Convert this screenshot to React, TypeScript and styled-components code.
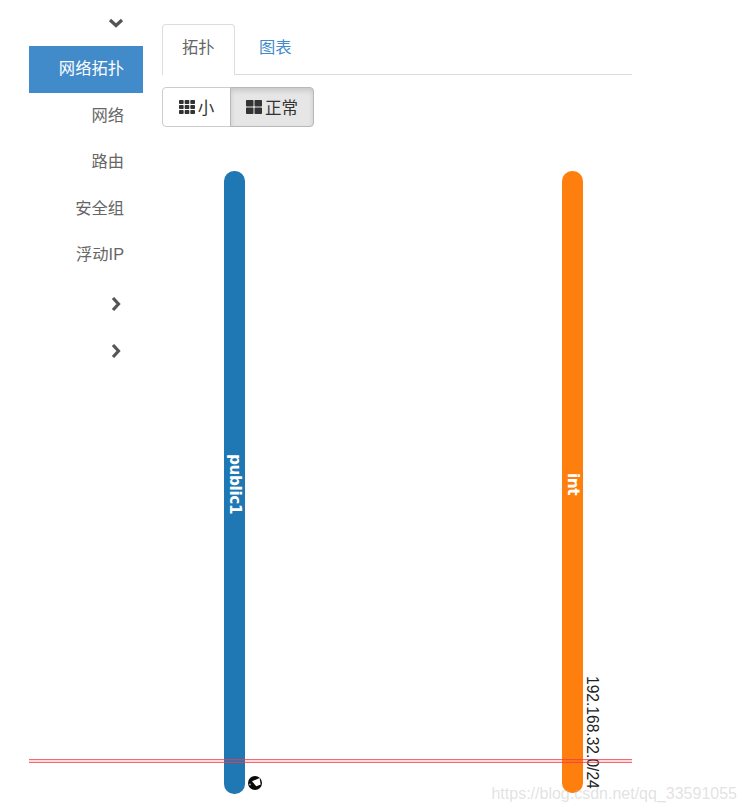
import React from "react";
import styled, { createGlobalStyle } from "styled-components";
import { FaTh, FaThLarge } from "react-icons/fa";

const GlobalStyle = createGlobalStyle`
  html, body {
    margin: 0;
    background: #fff;
  }
  body {
    font-family: "Liberation Sans", "Noto Sans CJK SC", sans-serif;
    color: #555;
  }
`;

const NAV_ITEMS = ["网络", "路由", "安全组", "浮动IP"];

const ChevronDown = () => (
  <ChevronIcon viewBox="0 0 16 10" $width={16} $height={10}>
    <path d="M2 2 L8 7.5 L14 2" />
  </ChevronIcon>
);

const ChevronRight = () => (
  <ChevronIcon viewBox="0 0 10 16" $width={10} $height={16}>
    <path d="M2 2 L7.5 8 L2 14" />
  </ChevronIcon>
);

export default function App() {
  return (
    <>
      <GlobalStyle />
      <Page>
        <Sidebar>
          <ChevronRow $height={46} $pad={19}>
            <ChevronDown />
          </ChevronRow>
          <NavItem $active>网络拓扑</NavItem>
          {NAV_ITEMS.map((item) => (
            <NavItem key={item}>{item}</NavItem>
          ))}
          <ChevronRow $height={50} $pad={22}>
            <ChevronRight />
          </ChevronRow>
          <ChevronRow $height={44} $pad={22}>
            <ChevronRight />
          </ChevronRow>
        </Sidebar>
        <Main>
          <Tabs>
            <Tab $active>拓扑</Tab>
            <Tab>图表</Tab>
          </Tabs>
          <ButtonGroup>
            <ToggleButton>
              <FaTh />小
            </ToggleButton>
            <ToggleButton $active>
              <FaThLarge />正常
            </ToggleButton>
          </ButtonGroup>
          <Canvas>
            <NetworkBar $left={62} $height={623} $color="#1f77b4">
              <BarLabel $top={283}>public1</BarLabel>
            </NetworkBar>
            <NetworkBar $left={400} $height={622} $color="#ff7f0e">
              <BarLabel $top={302}>int</BarLabel>
            </NetworkBar>
            <Subnet>192.168.32.0/24</Subnet>
            <PortIcon viewBox="0 0 14 14">
              <circle cx="7" cy="7" r="7" fill="#0a0a0a" />
              <path d="M4 5.3 L11.6 2 L12.7 8.6 L8.3 10.3 Z" fill="#fff" />
              <circle cx="2" cy="8.6" r="1" fill="#a0a0a0" />
            </PortIcon>
          </Canvas>
        </Main>
        <RedLine />
        <Watermark>https://blog.csdn.net/qq_33591055</Watermark>
      </Page>
    </>
  );
}

const Page = styled.div`
  position: relative;
  display: flex;
  gap: 19px;
  width: 746px;
  height: 810px;
  padding-left: 29px;
  box-sizing: border-box;
  overflow: hidden;
`;

const Sidebar = styled.nav`
  width: 114px;
  flex: none;
`;

const ChevronRow = styled.div<{ $height: number; $pad: number }>`
  display: flex;
  align-items: center;
  justify-content: flex-end;
  height: ${(p) => p.$height}px;
  padding-right: ${(p) => p.$pad}px;
`;

const ChevronIcon = styled.svg<{ $width: number; $height: number }>`
  width: ${(p) => p.$width}px;
  height: ${(p) => p.$height}px;

  path {
    fill: none;
    stroke: #555;
    stroke-width: 3.2;
  }
`;

const NavItem = styled.div<{ $active?: boolean }>`
  height: 47px;
  margin-bottom: -0.5px;
  line-height: 45px;
  padding-right: 19px;
  text-align: right;
  font-size: 16.3px;
  color: ${(p) => (p.$active ? "#fff" : "#666")};
  background: ${(p) => (p.$active ? "#428bca" : "transparent")};
`;

const Main = styled.main`
  width: 470px;
  flex: none;
  padding-top: 24px;
`;

const Tabs = styled.div`
  display: flex;
  height: 51px;
  box-sizing: border-box;
  border-bottom: 1px solid #ddd;
`;

const Tab = styled.div<{ $active?: boolean }>`
  height: 51px;
  box-sizing: border-box;
  padding: 0 ${(p) => (p.$active ? 19 : 23.5)}px;
  line-height: 45px;
  font-size: 16.3px;
  color: ${(p) => (p.$active ? "#666" : "#428bca")};
  background: ${(p) => (p.$active ? "#fff" : "transparent")};
  border: 1px solid ${(p) => (p.$active ? "#ddd" : "transparent")};
  border-bottom: 0;
  border-radius: 4px 4px 0 0;
`;

const ButtonGroup = styled.div`
  display: flex;
  margin-top: 12px;
  width: 152px;
  height: 40px;
`;

const ToggleButton = styled.div<{ $active?: boolean }>`
  display: flex;
  align-items: center;
  justify-content: center;
  gap: 3px;
  box-sizing: border-box;
  width: ${(p) => (p.$active ? 84 : 69)}px;
  margin-left: ${(p) => (p.$active ? -1 : 0)}px;
  font-size: 16.5px;
  color: #333;
  background: ${(p) => (p.$active ? "#e6e6e6" : "#fff")};
  border: 1px solid ${(p) => (p.$active ? "#b8b8b8" : "#ccc")};
  border-radius: ${(p) => (p.$active ? "0 4px 4px 0" : "4px 0 0 4px")};
  box-shadow: ${(p) => (p.$active ? "inset 0 3px 5px rgba(0,0,0,.125)" : "none")};

  svg {
    font-size: 16px;
  }
`;

const Canvas = styled.div`
  position: relative;
  height: 670px;
`;

const NetworkBar = styled.div<{ $left: number; $height: number; $color: string }>`
  position: absolute;
  left: ${(p) => p.$left}px;
  top: 44px;
  width: 21px;
  height: ${(p) => p.$height}px;
  border-radius: 10px;
  background: ${(p) => p.$color};
`;

const BarLabel = styled.span<{ $top: number }>`
  position: absolute;
  top: ${(p) => p.$top}px;
  left: 0;
  width: 21px;
  line-height: 21px;
  writing-mode: vertical-rl;
  font-size: 15.3px;
  letter-spacing: -0.4px;
  font-weight: 700;
  font-family: "DejaVu Sans", sans-serif;
  color: #fff;
`;

const Subnet = styled.span`
  position: absolute;
  left: 420px;
  top: 549px;
  line-height: 20px;
  writing-mode: vertical-rl;
  font-size: 15.6px;
  color: #222;
`;

const PortIcon = styled.svg`
  position: absolute;
  left: 86px;
  top: 649px;
  width: 14px;
  height: 14px;
`;

const RedLine = styled.div`
  position: absolute;
  left: 29px;
  top: 759px;
  width: 603px;
  height: 4px;
  box-sizing: border-box;
  border-top: 1px solid rgba(240, 60, 70, 0.7);
  border-bottom: 1px solid rgba(240, 60, 70, 0.7);
  background: rgba(240, 60, 70, 0.2);
`;

const Watermark = styled.span`
  position: absolute;
  right: 9px;
  bottom: 7px;
  font-size: 16px;
  color: rgba(190, 190, 190, 0.45);
`;
